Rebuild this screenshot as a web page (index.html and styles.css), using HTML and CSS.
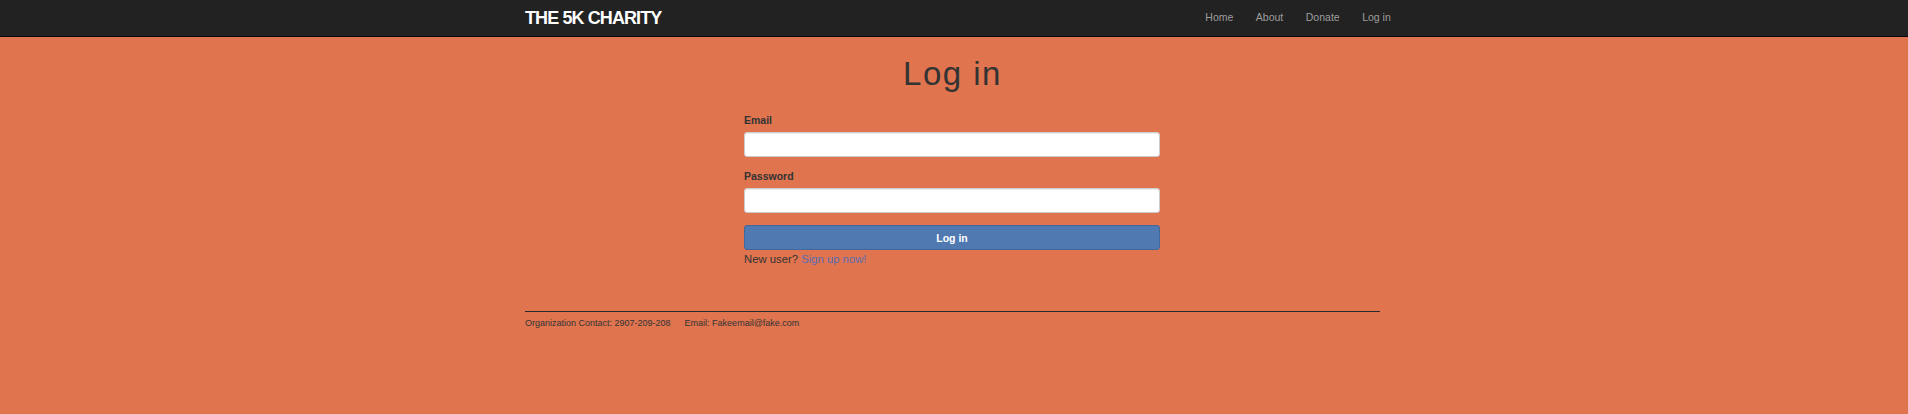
FILE: index.html
```html
<!DOCTYPE html>
<html lang="en">
<head>
<meta charset="utf-8">
<title>Log in | The 5K Charity</title>
<link rel="stylesheet" href="styles.css">
</head>
<body>
<header class="navbar">
  <div class="nav-inner">
    <a class="logo" href="#">The 5K Charity</a>
    <nav class="nav-links">
      <a href="#">Home</a>
      <a href="#">About</a>
      <a href="#">Donate</a>
      <a href="#">Log in</a>
    </nav>
  </div>
</header>
<main class="container">
  <h1 class="title">Log in</h1>
  <form class="login-form">
    <label class="field-label" for="email">Email</label>
    <input class="field-input" id="email" type="email">
    <label class="field-label" for="password">Password</label>
    <input class="field-input" id="password" type="password">
    <button class="submit-btn" type="button">Log in</button>
    <p class="signup">New user? <a href="#">Sign up now!</a></p>
  </form>
  <footer class="footer">
    <span>Organization Contact: 2907-209-208</span>
    <span>Email: Fakeemail@fake.com</span>
  </footer>
</main>
</body>
</html>
```
FILE: styles.css
```css
* { box-sizing: border-box; }
html, body { margin: 0; padding: 0; }
body {
  background: #df744f;
  font-family: "Liberation Sans", Arial, Helvetica, sans-serif;
  color: #333;
  min-height: 414px;
}
.navbar {
  height: 37px;
  background: #222;
  border-bottom: 1px solid #080808;
}
.nav-inner {
  width: 877px;
  margin-left: calc(50% - 440px);
  padding: 0 0 0 11px;
  display: flex;
  justify-content: space-between;
  align-items: flex-start;
}
.logo {
  font-size: 18px;
  line-height: 36px;
  font-weight: bold;
  letter-spacing: -0.9px;
  text-transform: uppercase;
  color: #fff;
  text-decoration: none;
}
.nav-links {
  display: flex;
  margin-right: -11px;
}
.nav-links a {
  font-size: 10.5px;
  line-height: 34px;
  padding: 0 11.25px;
  color: #9d9d9d;
  text-decoration: none;
}
.container {
  width: 877px;
  margin-left: calc(50% - 440px);
  padding: 0 11px;
}
.title {
  margin: 17px 0 19px;
  font-size: 33px;
  line-height: 40px;
  font-weight: normal;
  letter-spacing: 1.5px;
  text-align: center;
  color: #333;
}
.login-form {
  width: 416px;
  margin-left: 219px;
  display: flex;
  flex-direction: column;
}
.field-label {
  font-size: 10.5px;
  line-height: 15px;
  font-weight: bold;
  margin-bottom: 4px;
}
.field-input {
  height: 25px;
  margin: 0 0 12px;
  border: 1px solid #ccc;
  border-radius: 3px;
  background: #fff;
  box-shadow: inset 0 1px 1px rgba(0,0,0,0.075);
}
.field-input + .submit-btn { margin-top: 0; }
.submit-btn {
  height: 25px;
  border: 1px solid #42679c;
  border-radius: 3px;
  background: #5079b1;
  color: #fff;
  font-family: inherit;
  font-size: 10.5px;
  font-weight: bold;
  padding: 0;
}
.signup {
  margin: 2px 0 0;
  font-size: 11.3px;
  line-height: 15px;
}
.signup a {
  color: #5a6db3;
  text-decoration: none;
}
.footer {
  margin-top: 44px;
  border-top: 1px solid #2a2a2a;
  padding-top: 5px;
  font-size: 9px;
  line-height: 12px;
  color: #333;
  display: flex;
  gap: 14px;
}
```
